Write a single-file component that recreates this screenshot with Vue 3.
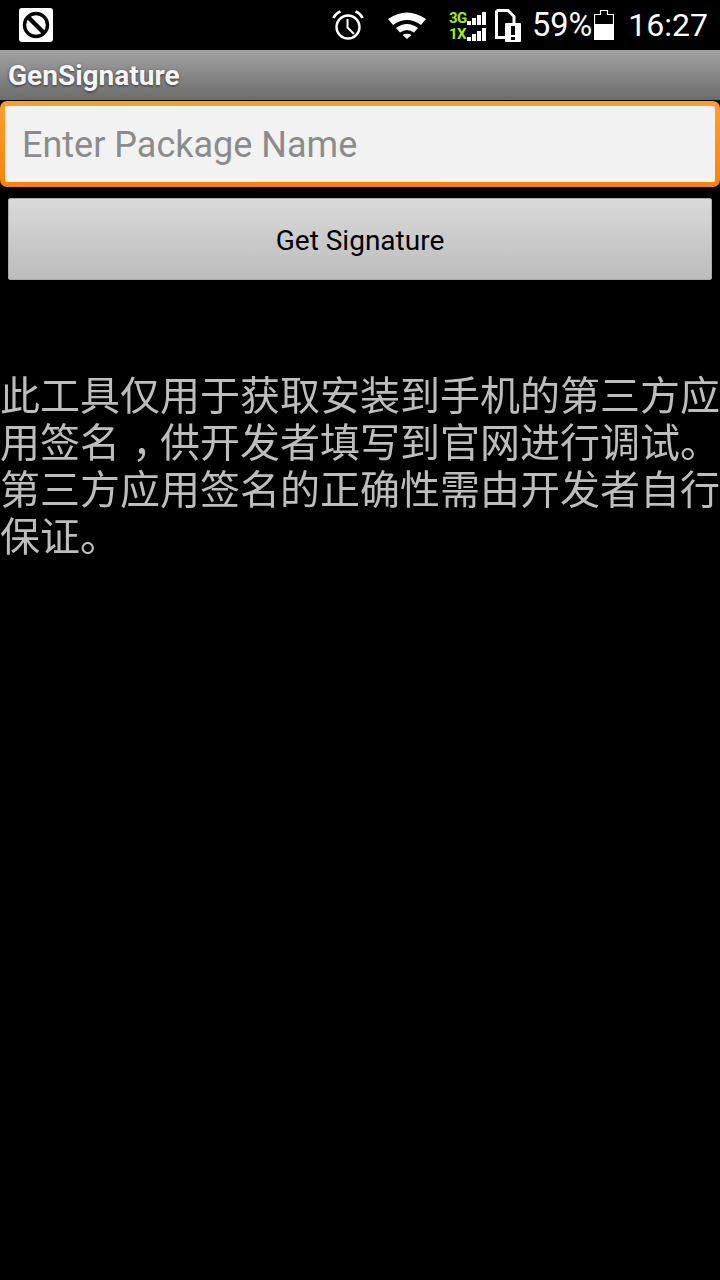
<template>
  <div class="screen">
    <div class="status-bar">
      <svg class="notif" width="34" height="34" viewBox="0 0 34 34">
        <rect width="34" height="34" rx="3" fill="#fff" />
        <circle cx="17" cy="17" r="11.5" fill="none" stroke="#000" stroke-width="3.4" />
        <path d="M9 9L25 25" stroke="#000" stroke-width="4.4" />
      </svg>
      <div class="status-right">
        <svg class="alarm" width="32" height="30" viewBox="0 0 32 30">
          <circle cx="16" cy="17" r="11.5" fill="none" stroke="#fff" stroke-width="2.4" />
          <path d="M15.5 9V17.5L22 24" fill="none" stroke="#fff" stroke-width="2" />
          <path d="M1.5 8Q3.5 3.5 8.5 1.5M30.5 8Q28.5 3.5 23.5 1.5" fill="none" stroke="#fff" stroke-width="2.8" />
        </svg>
        <svg class="wifi" width="38" height="27" viewBox="0 0 38 27">
          <path d="M0 7Q19 -6 38 7L33 13Q19 3 5 13Z" fill="#fff" />
          <path d="M8 16Q19 8 30 16L26 20.5Q19 15.5 12 20.5Z" fill="#fff" />
          <path d="M14.5 23Q19 20.5 23.5 23L19 27Z" fill="#fff" />
        </svg>
        <div class="signal">
          <div class="signal-row" v-for="net in networks" :key="net">
            <span class="net">{{ net }}</span>
            <span class="bars">
              <i v-for="h in barHeights" :key="h" :style="{ height: h + 'px' }"></i>
            </span>
          </div>
        </div>
        <svg class="sim" width="26" height="33" viewBox="0 0 26 33">
          <path d="M1.5 1.5H13L19 7.5V14M1.5 1.5V28.5H10" fill="none" stroke="#fff" stroke-width="3" />
          <rect x="10" y="14" width="16" height="19" rx="1" fill="#fff" />
          <rect x="16" y="17" width="4" height="9" fill="#000" />
          <rect x="16" y="28" width="4" height="3" fill="#000" />
        </svg>
        <span class="percent">59%</span>
        <svg class="battery" width="20" height="30" viewBox="0 0 20 30">
          <path d="M6.5 4.5V0.5H13.5V4.5H19.5V29.5H0.5V4.5Z" fill="none" stroke="#fff" stroke-width="1.2" />
          <rect x="0" y="14" width="20" height="16" fill="#fff" />
        </svg>
        <span class="clock">16:27</span>
      </div>
    </div>

    <div class="app-bar">GenSignature</div>

    <input class="package-input" type="text" placeholder="Enter Package Name" />
    <button class="get-button">Get Signature</button>

    <p class="notice">此工具仅用于获取安装到手机的第三方应用签名<span class="comma">，</span>供开发者填写到官网进行调试。第三方应用签名的正确性需由开发者自行保证。</p>
  </div>
</template>

<script setup>
const networks = ['3G', '1X'];
const barHeights = [4, 7, 10, 13];
</script>

<style>
html,
body {
  margin: 0;
  background: #000;
}
</style>

<style scoped>
.screen {
  width: 720px;
  height: 1280px;
  background: #000;
  font-family: Roboto, "Noto Sans CJK SC", sans-serif;
  overflow: hidden;
}

.status-bar {
  height: 50px;
  display: flex;
  align-items: center;
  justify-content: space-between;
  padding: 0 12px 0 19px;
  color: #fff;
}

.status-right {
  display: flex;
  align-items: center;
}

.alarm {
  margin-right: 24px;
}

.wifi {
  margin-right: 23px;
}

.signal {
  width: 37px;
  margin-right: 9px;
}

.signal-row {
  height: 16px;
  display: flex;
  align-items: flex-end;
  justify-content: space-between;
}

.net {
  color: #a6f000;
  font-size: 15px;
  font-weight: 700;
  line-height: 13px;
  letter-spacing: -0.5px;
}

.bars {
  display: flex;
  align-items: flex-end;
  gap: 1px;
}

.bars i {
  display: block;
  width: 4px;
  background: #fff;
}

.percent {
  font-size: 32.5px;
  margin-left: 11px;
  margin-right: 2px;
}

.clock {
  font-size: 32px;
  margin-left: 14px;
}

.app-bar {
  height: 50px;
  padding-left: 8px;
  box-sizing: border-box;
  background: linear-gradient(#a2a2a2, #6c6c6c);
  color: #f5f5f5;
  font-size: 28px;
  font-weight: 700;
  line-height: 51px;
  text-shadow: 0 1px 3px #333;
}

.package-input {
  display: block;
  width: 720px;
  height: 86px;
  margin: 1px 0 0;
  box-sizing: border-box;
  padding: 2px 17px 0;
  background: linear-gradient(#f2f2f2, #f2f2f2) padding-box, linear-gradient(#ffa02c, #f98208) border-box;
  border: 5px solid transparent;
  border-radius: 7px;
  outline: none;
  font-family: Roboto, sans-serif;
  font-size: 36px;
  color: #222;
}

.package-input::placeholder {
  color: #8c8c8c;
  opacity: 1;
}

.get-button {
  display: block;
  width: 704px;
  height: 82px;
  margin: 11px 8px 0;
  padding: 3px 0 0;
  background: linear-gradient(#d9d9d9, #bdbdbd);
  border: 1px solid #aaa;
  border-radius: 2px;
  color: #000;
  font-family: Roboto, sans-serif;
  font-size: 28px;
}

.notice {
  margin: 93px 0 0;
  color: #bdbdbd;
  font-size: 40px;
  line-height: 47px;
  transform: translateZ(0);
}

/* the comma sits in the middle of its cell on the device */
.comma {
  margin-left: 12px;
  letter-spacing: -12px;
}
</style>
